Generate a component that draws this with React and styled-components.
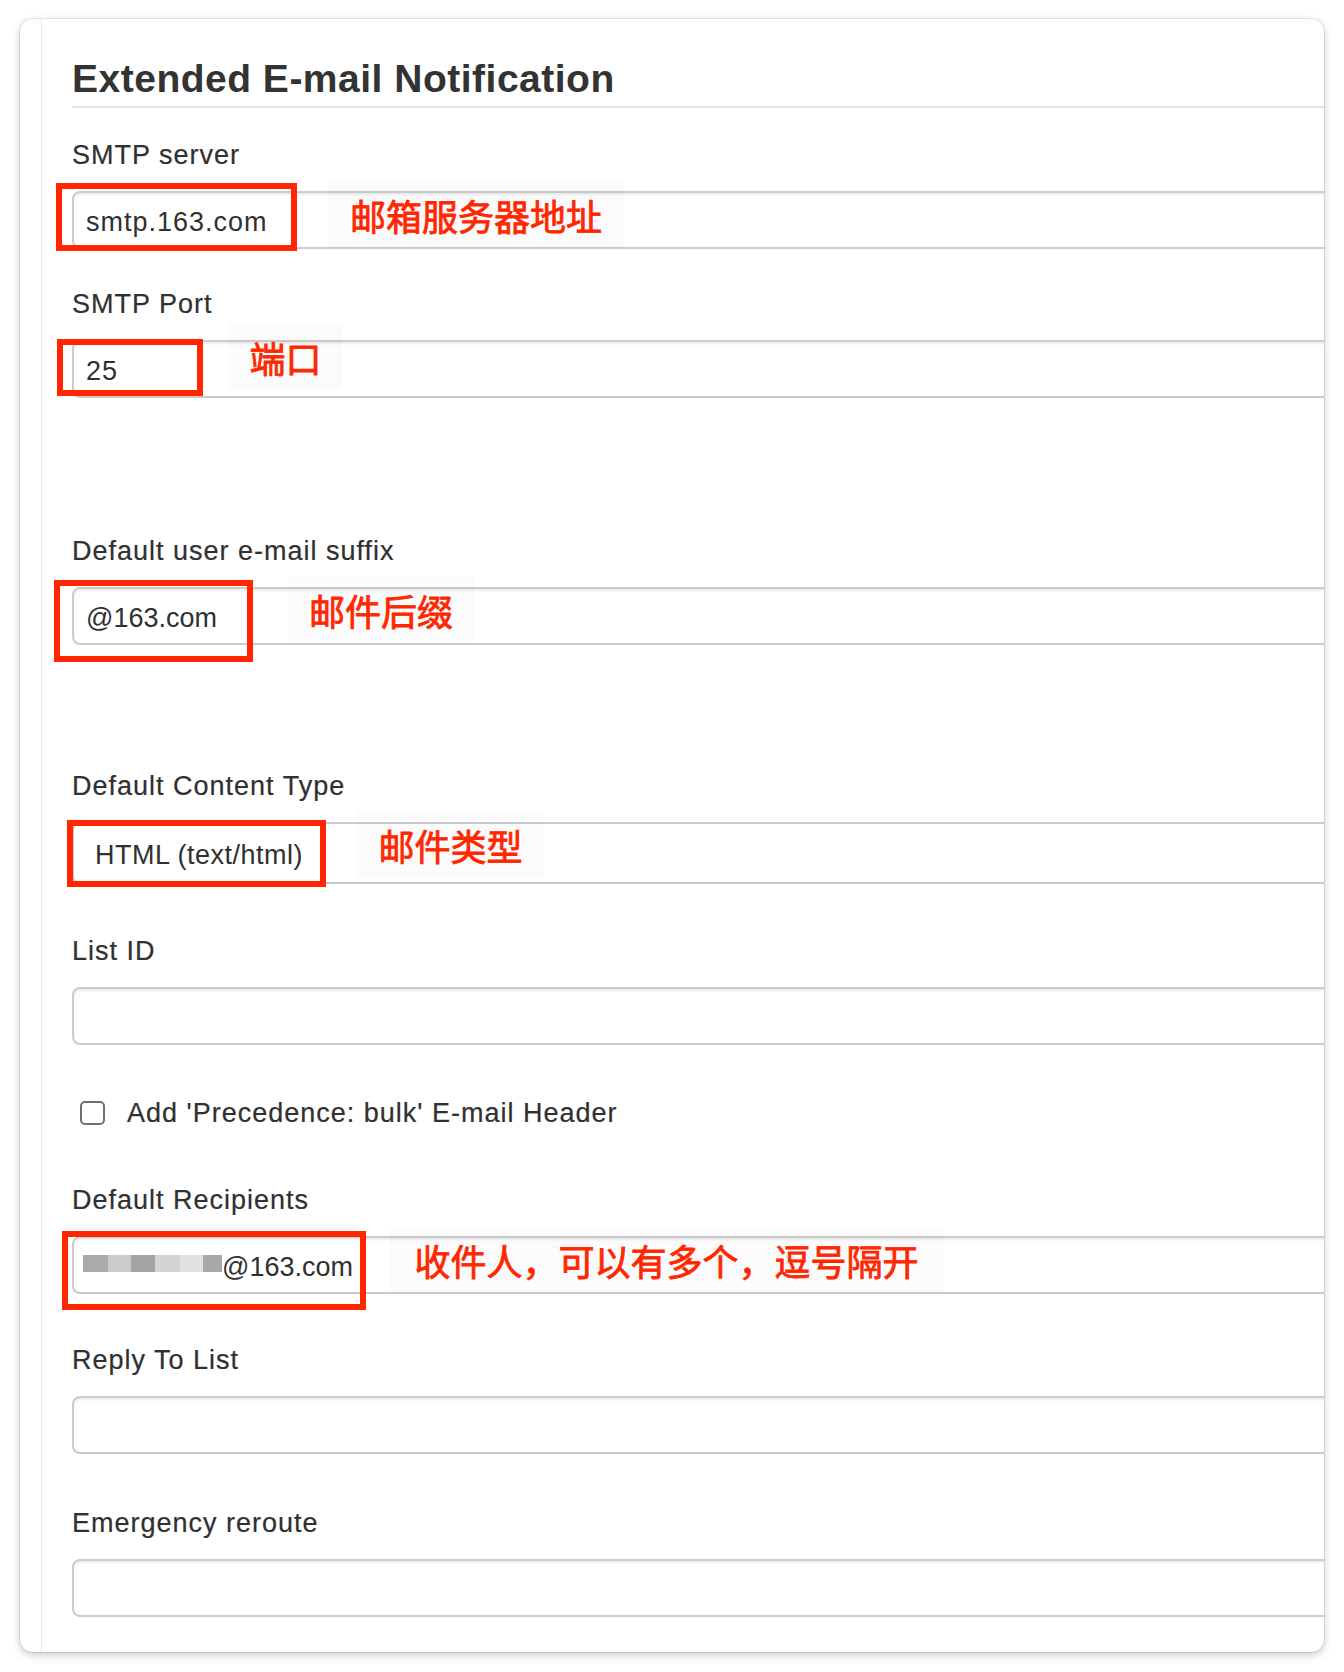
import React from "react";
//styling
import styled, { createGlobalStyle } from "styled-components";

const RED = "#ff2600";

const fields = [
  {
    label: "SMTP server",
    gap: 31,
    value: "smtp.163.com",
    mark: { x: -16, y: -8, w: 241, h: 68 },
    note: { x: 257, y: -9, w: 294, h: 66, text: "邮箱服务器地址" },
  },
  {
    label: "SMTP Port",
    gap: 39,
    value: "25",
    mark: { x: -15, y: -1, w: 146, h: 57 },
    note: { x: 157, y: -17, w: 113, h: 67, text: "端口" },
  },
  {
    label: "Default user e-mail suffix",
    gap: 137,
    value: "@163.com",
    tight: true,
    mark: { x: -18, y: -7, w: 199, h: 82 },
    note: { x: 216, y: -10, w: 186, h: 66, text: "邮件后缀" },
  },
];

// blurred part of the address
const blocks = [
  { w: 25, c: "#aaaaaa" },
  { w: 23, c: "#cbcbcb" },
  { w: 24, c: "#a3a3a3" },
  { w: 25, c: "#d4d4d4" },
  { w: 23, c: "#e2e2e2" },
  { w: 19, c: "#a9a9a9" },
];

const Annotated = ({ mark, note, children }) => (
  <InputWrap>
    {children}
    {mark && <Mark $x={mark.x} $y={mark.y} $w={mark.w} $h={mark.h} />}
    {note && (
      <Note $x={note.x} $y={note.y} $w={note.w} $h={note.h}>
        {note.text}
      </Note>
    )}
  </InputWrap>
);

const App = () => {
  return (
    <Page>
      <GlobalStyle />
      <Card>
        <Rail />
        <Main>
          <Title>Extended E-mail Notification</Title>

          {fields.map((f) => (
            <Field key={f.label} $gap={f.gap}>
              <Label>{f.label}</Label>
              <Annotated mark={f.mark} note={f.note}>
                <TextInput defaultValue={f.value} $tight={f.tight} readOnly />
              </Annotated>
            </Field>
          ))}

          <Field $gap={125}>
            <Label>Default Content Type</Label>
            <Annotated
              mark={{ x: -5, y: -2, w: 259, h: 67 }}
              note={{ x: 285, y: -10, w: 187, h: 66, text: "邮件类型" }}
            >
              <Select defaultValue="html">
                <option value="html">HTML (text/html)</option>
                <option value="text">Plain Text (text/plain)</option>
              </Select>
            </Annotated>
          </Field>

          <Field $gap={51}>
            <Label>List ID</Label>
            <TextInput readOnly />
          </Field>

          <CheckRow>
            <Check />
            Add 'Precedence: bulk' E-mail Header
          </CheckRow>

          <Field $gap={55}>
            <Label>Default Recipients</Label>
            <Annotated
              mark={{ x: -10, y: -5, w: 304, h: 79 }}
              note={{ x: 318, y: -9, w: 553, h: 66, text: "收件人，可以有多个，逗号隔开" }}
            >
              <ValueBox $tight>
                <Mosaic>
                  {blocks.map((b, i) => (
                    <Block key={i} $w={b.w} $c={b.c} />
                  ))}
                </Mosaic>
                @163.com
              </ValueBox>
            </Annotated>
          </Field>

          <Field $gap={50}>
            <Label>Reply To List</Label>
            <TextInput readOnly />
          </Field>

          <Field $gap={53}>
            <Label>Emergency reroute</Label>
            <TextInput readOnly />
          </Field>
        </Main>
      </Card>
    </Page>
  );
};

const GlobalStyle = createGlobalStyle`
  html, body {
    margin: 0;
    padding: 0;
    background: #ffffff;
  }
  body {
    font-family: "Liberation Sans", Arial, "Noto Sans CJK SC", sans-serif;
    color: #303030;
  }
`;

const Page = styled.div`
  padding: 19px 20px 20px;
`;

const Card = styled.div`
  display: flex;
  background: #ffffff;
  border-radius: 13px;
  overflow: hidden;
  box-shadow: 0 0 0 1px rgba(0, 0, 0, 0.07), 0 3px 9px rgba(0, 0, 0, 0.22);
`;

const Rail = styled.div`
  flex: none;
  width: 21px;
  border-right: 1px solid #e3eaed;
`;

const Main = styled.div`
  flex: 1;
  min-width: 0;
  margin-right: -12px;
  padding: 37px 0 35px 30px;
`;

const Title = styled.h1`
  margin: 0;
  padding-bottom: 4px;
  border-bottom: 2px solid #e2e2e2;
  font-size: 39px;
  line-height: 46px;
  font-weight: 700;
  letter-spacing: 0.5px;
  color: #333333;
`;

const Field = styled.div`
  margin-top: ${(p) => p.$gap}px;
`;

const Label = styled.div`
  margin-bottom: 20px;
  font-size: 27px;
  line-height: 32px;
  letter-spacing: 1px;
  -webkit-text-stroke: 0.2px #303030;
`;

const InputWrap = styled.div`
  position: relative;
`;

const TextInput = styled.input`
  display: flex;
  align-items: center;
  box-sizing: border-box;
  width: 100%;
  height: 58px;
  margin: 0;
  padding: 4px 12px 0;
  border: 2px solid #cccccc;
  border-radius: 8px;
  box-shadow: inset 0 2px 2px rgba(0, 0, 0, 0.075);
  background: #ffffff;
  font-family: "Liberation Sans", Arial, sans-serif;
  font-size: 27px;
  letter-spacing: ${(p) => (p.$tight ? 0 : 1)}px;
  color: #303030;
  outline: none;
`;

const ValueBox = styled(TextInput).attrs({ as: "div" })`
  white-space: nowrap;
`;

const Select = styled.select`
  display: block;
  box-sizing: border-box;
  width: 100%;
  height: 62px;
  margin: 0;
  padding: 4px 21px 0;
  appearance: none;
  border: 2px solid #cccccc;
  border-radius: 8px;
  background: #ffffff;
  font-family: "Liberation Sans", Arial, sans-serif;
  font-size: 27px;
  letter-spacing: 0.5px;
  color: #303030;
  outline: none;
`;

const Mosaic = styled.span`
  display: inline-flex;
  margin: 0 0 8px -3px;
`;

const Block = styled.span`
  display: inline-block;
  width: ${(p) => p.$w}px;
  height: 17px;
  background: ${(p) => p.$c};
`;

const Mark = styled.div`
  position: absolute;
  left: ${(p) => p.$x}px;
  top: ${(p) => p.$y}px;
  width: ${(p) => p.$w}px;
  height: ${(p) => p.$h}px;
  box-sizing: border-box;
  border: 6px solid ${RED};
  pointer-events: none;
`;

const Note = styled.div`
  position: absolute;
  left: ${(p) => p.$x}px;
  top: ${(p) => p.$y}px;
  width: ${(p) => p.$w}px;
  height: ${(p) => p.$h}px;
  display: flex;
  align-items: center;
  justify-content: center;
  background: rgba(0, 0, 0, 0.015);
  color: ${RED};
  font-family: "Noto Sans CJK SC", sans-serif;
  font-size: 36px;
  line-height: 1;
  white-space: nowrap;
  -webkit-text-stroke: 0.8px ${RED};
`;

const CheckRow = styled.label`
  display: flex;
  align-items: center;
  gap: 22px;
  margin-top: 52px;
  padding-left: 8px;
  font-size: 27px;
  line-height: 32px;
  letter-spacing: 1px;
  -webkit-text-stroke: 0.2px #303030;
`;

const Check = styled.input.attrs({ type: "checkbox" })`
  flex: none;
  box-sizing: border-box;
  width: 25px;
  height: 24px;
  margin: 0;
  appearance: none;
  border: 2px solid #6f6f6f;
  border-radius: 5px;
  background: #ffffff;
`;

export default App;
